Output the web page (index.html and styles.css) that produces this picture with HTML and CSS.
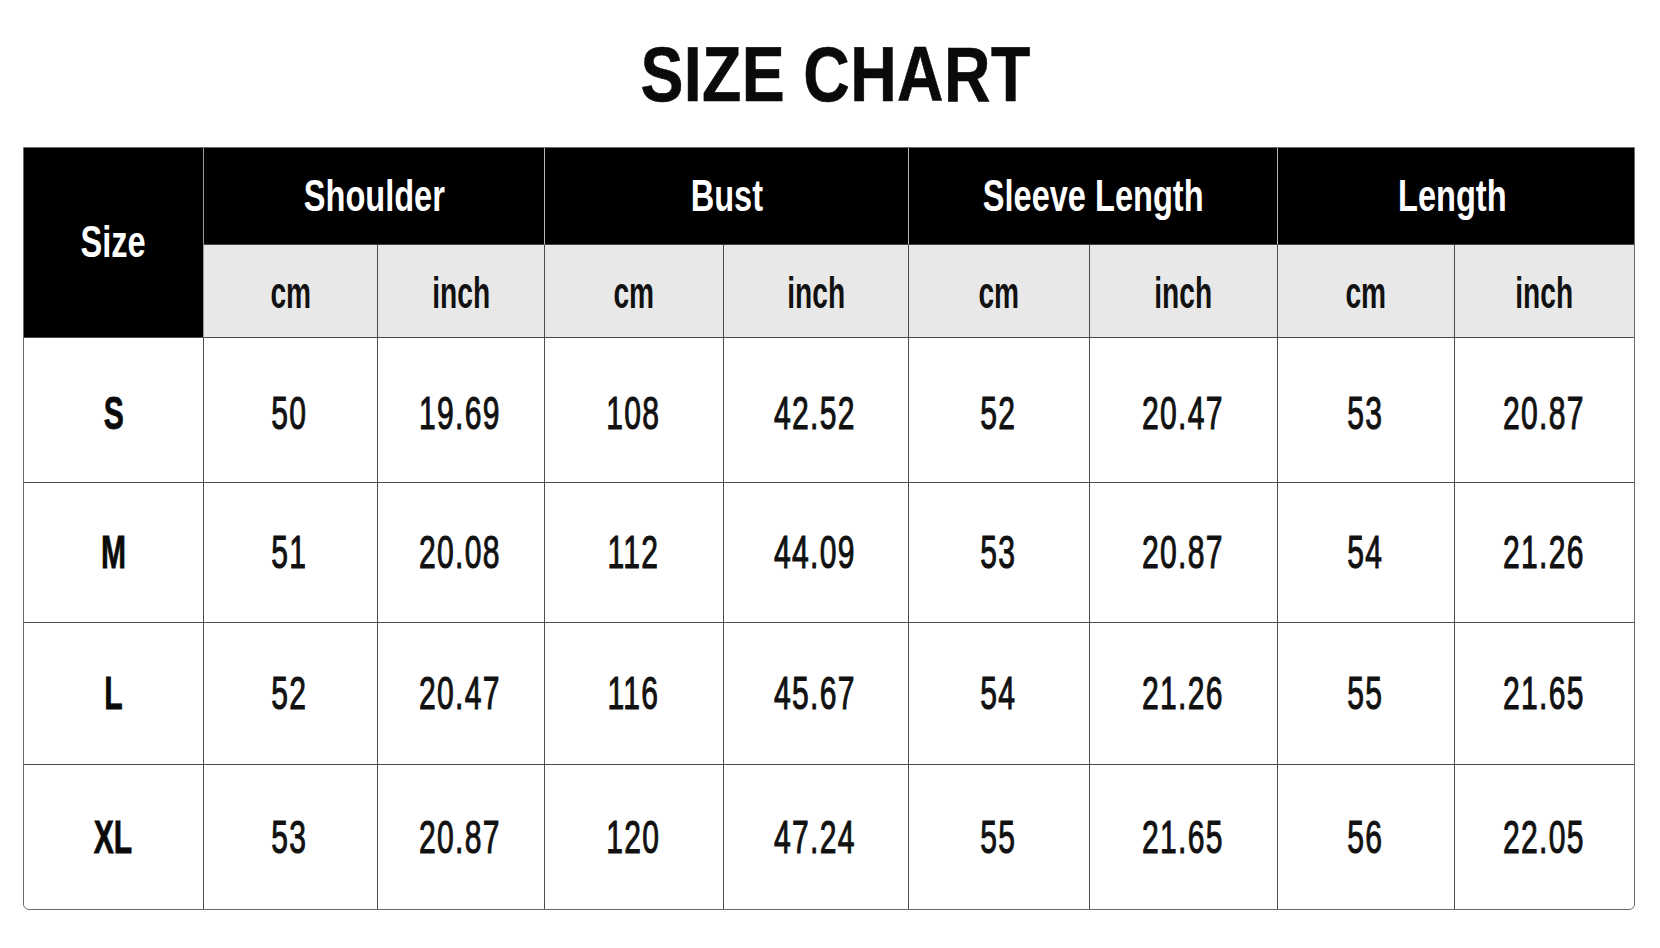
FILE: index.html
```html
<!DOCTYPE html>
<html lang="en">
<head>
<meta charset="utf-8">
<title>Size Chart</title>
<link rel="stylesheet" href="styles.css">
</head>
<body>
<main class="page">
  <h1 class="title"><span class="t t-title">SIZE CHART</span></h1>
  <table class="chart">
    <colgroup>
      <col class="c-size">
      <col class="c1"><col class="c2">
      <col class="c3"><col class="c4">
      <col class="c5"><col class="c6">
      <col class="c7"><col class="c8">
    </colgroup>
    <thead>
      <tr class="row-group">
        <th class="h-size" rowspan="2"><span class="t t-head">Size</span></th>
        <th class="h-group" colspan="2"><span class="t t-head">Shoulder</span></th>
        <th class="h-group" colspan="2"><span class="t t-head">Bust</span></th>
        <th class="h-group" colspan="2"><span class="t t-head">Sleeve Length</span></th>
        <th class="h-group last" colspan="2"><span class="t t-head t-shift">Length</span></th>
      </tr>
      <tr class="row-unit">
        <th class="h-unit"><span class="t t-unit">cm</span></th>
        <th class="h-unit"><span class="t t-unit">inch</span></th>
        <th class="h-unit"><span class="t t-unit">cm</span></th>
        <th class="h-unit"><span class="t t-unit">inch</span></th>
        <th class="h-unit"><span class="t t-unit">cm</span></th>
        <th class="h-unit"><span class="t t-unit">inch</span></th>
        <th class="h-unit"><span class="t t-unit">cm</span></th>
        <th class="h-unit last"><span class="t t-unit">inch</span></th>
      </tr>
    </thead>
    <tbody>
      <tr class="r-s">
        <th class="size"><span class="t t-size">S</span></th>
        <td><span class="t t-num">50</span></td>
        <td><span class="t t-num">19.69</span></td>
        <td><span class="t t-num">108</span></td>
        <td><span class="t t-num">42.52</span></td>
        <td><span class="t t-num">52</span></td>
        <td><span class="t t-num">20.47</span></td>
        <td><span class="t t-num">53</span></td>
        <td class="last"><span class="t t-num">20.87</span></td>
      </tr>
      <tr class="r-m">
        <th class="size"><span class="t t-size">M</span></th>
        <td><span class="t t-num">51</span></td>
        <td><span class="t t-num">20.08</span></td>
        <td><span class="t t-num">112</span></td>
        <td><span class="t t-num">44.09</span></td>
        <td><span class="t t-num">53</span></td>
        <td><span class="t t-num">20.87</span></td>
        <td><span class="t t-num">54</span></td>
        <td class="last"><span class="t t-num">21.26</span></td>
      </tr>
      <tr class="r-l">
        <th class="size"><span class="t t-size">L</span></th>
        <td><span class="t t-num">52</span></td>
        <td><span class="t t-num">20.47</span></td>
        <td><span class="t t-num">116</span></td>
        <td><span class="t t-num">45.67</span></td>
        <td><span class="t t-num">54</span></td>
        <td><span class="t t-num">21.26</span></td>
        <td><span class="t t-num">55</span></td>
        <td class="last"><span class="t t-num">21.65</span></td>
      </tr>
      <tr class="r-xl">
        <th class="size"><span class="t t-size">XL</span></th>
        <td><span class="t t-num">53</span></td>
        <td><span class="t t-num">20.87</span></td>
        <td><span class="t t-num">120</span></td>
        <td><span class="t t-num">47.24</span></td>
        <td><span class="t t-num">55</span></td>
        <td><span class="t t-num">21.65</span></td>
        <td><span class="t t-num">56</span></td>
        <td class="last"><span class="t t-num">22.05</span></td>
      </tr>
    </tbody>
  </table>
</main>
</body>
</html>
```

FILE: styles.css
```css
html, body {
  margin: 0;
  padding: 0;
  background: #ffffff;
}

body {
  font-family: "Liberation Sans", Arial, sans-serif;
  color: #111111;
}

.page {
  padding: 30px 0 0 23px;
  width: 1610px;
}

.title {
  margin: 0 0 39px 0;
  padding-left: 14px;
  height: 78px;
  line-height: 78px;
  text-align: center;
  font-weight: 700;
}

.t-title {
  font-size: 78px;
  line-height: 78px;
  color: #0a0a0a;
  letter-spacing: 0.5px;
  -webkit-text-stroke: 0.6px #0a0a0a;
  transform: scaleX(0.825);
}

.chart {
  table-layout: fixed;
  border-collapse: separate;
  border-spacing: 0;
  width: 1610px;
  border: 1px solid #6a6a6a;
  border-radius: 0 0 6px 6px;
}

.c-size { width: 180px; }
.c1 { width: 174px; }
.c2 { width: 167px; }
.c3 { width: 179px; }
.c4 { width: 185px; }
.c5 { width: 181px; }
.c6 { width: 188px; }
.c7 { width: 177px; }
.c8 { width: 179px; }

.chart th,
.chart td {
  padding: 0;
  text-align: center;
  vertical-align: middle;
  border-right: 1px solid #4d4d4d;
  border-bottom: 1px solid #4d4d4d;
  box-sizing: border-box;
}

.chart .last {
  border-right: none;
}

.chart tbody tr.r-xl th,
.chart tbody tr.r-xl td {
  border-bottom: none;
}

.row-group { height: 97px; }
.row-unit { height: 93px; }
.r-s { height: 145px; }
.r-m { height: 140px; }
.r-l { height: 142px; }
.r-xl { height: 144px; }

.h-size {
  background: #000000;
  color: #ffffff;
  border-right-color: #9a9a9a !important;
  border-bottom-color: #4d4d4d;
}

.h-group {
  background: #000000;
  color: #ffffff;
  border-right-color: #b5b5b5 !important;
  border-bottom-color: #444444 !important;
}

.h-unit {
  background: #e8e8e8;
  color: #111111;
}

.size,
.chart td {
  background: #ffffff;
}

.r-xl .size {
  border-bottom-left-radius: 6px;
}

.r-xl .last {
  border-bottom-right-radius: 6px;
}

.t {
  display: inline-block;
  white-space: nowrap;
  line-height: 1.15;
}

.t-head {
  font-size: 44px;
  font-weight: 700;
  transform: scaleX(0.74);
}

.t-shift {
  position: relative;
  left: -4px;
}

.t-unit {
  font-size: 44px;
  font-weight: 700;
  transform: scaleX(0.64);
  position: relative;
  top: 2px;
}

.t-size {
  font-size: 47px;
  font-weight: 700;
  -webkit-text-stroke: 0.8px #0a0a0a;
  transform: scaleX(0.64);
  color: #0a0a0a;
}

.t-num {
  font-size: 47px;
  font-weight: 400;
  letter-spacing: 2px;
  -webkit-text-stroke: 1.1px #111111;
  transform: scaleX(0.64);
  color: #111111;
  position: relative;
  left: -1px;
}

.r-s .t {
  position: relative;
  top: 3px;
}

.r-s .t-num {
  left: -1px;
}
```
